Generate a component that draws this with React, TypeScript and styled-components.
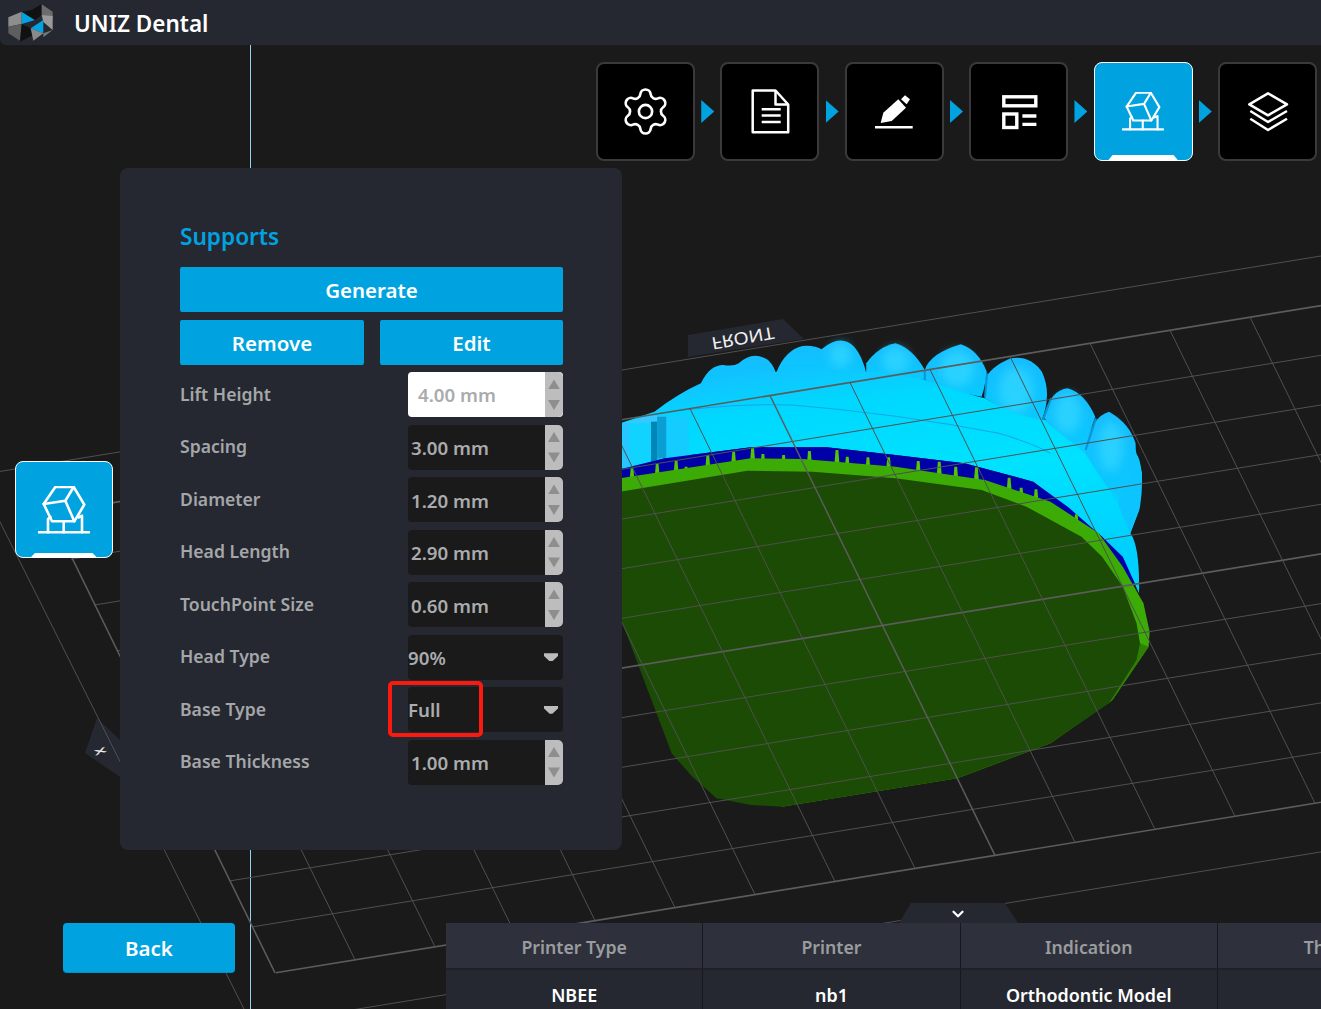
import React from "react";
import styled, { createGlobalStyle } from "styled-components";
import { Settings, ChevronDown } from "lucide-react";

const Global = createGlobalStyle`
  html, body { margin: 0; padding: 0; background: #1a1a1a; }
  * { box-sizing: border-box; }
  body { font-family: "Noto Sans", "Open Sans", sans-serif; }
`;

const Page = styled.div`
  position: relative;
  width: 1321px;
  height: 1009px;
  overflow: hidden;
  background: #1a1a1a;
`;
const SceneSvg = styled.svg`
  position: absolute;
  left: 0;
  top: 0;
  z-index: 0;
`;
const Content = styled.div`
  position: relative;
  z-index: 1;
  display: flex;
  flex-direction: column;
  height: 100%;
`;
const Header = styled.header`
  display: flex;
  align-items: center;
  flex: none;
  height: 45px;
  padding-left: 6px;
  background: #252830;
  border-bottom-left-radius: 6px;
`;
const LogoSvg = styled.svg`
  flex: none;
  margin-right: 8px;
`;
const AppTitle = styled.h1`
  margin: 0;
  padding-top: 2px;
  font-size: 22.5px;
  font-weight: 600;
  color: #fff;
`;
const Toolbar = styled.nav`
  display: flex;
  justify-content: flex-end;
  align-items: center;
  flex: none;
  height: 99px;
  margin-top: 17px;
  padding-right: 4px;
`;
const StepButton = styled.div<{ $active?: boolean }>`
  position: relative;
  display: flex;
  align-items: center;
  justify-content: center;
  flex: none;
  width: 99px;
  height: 99px;
  border-radius: 8px;
  color: #fff;
  background: ${(p) => (p.$active ? "#00a3e0" : "#000")};
  border: ${(p) => (p.$active ? "1px solid #fff" : "2px solid #3a3a3a")};
  ${(p) =>
    p.$active &&
    `&::after {
      content: "";
      position: absolute;
      left: 13px;
      right: 13px;
      bottom: -1px;
      height: 6px;
      background: #fff;
      clip-path: polygon(5px 0, calc(100% - 5px) 0, 100% 100%, 0 100%);
    }`}
`;
const ArrowSlot = styled.div`
  display: flex;
  align-items: center;
  justify-content: center;
  flex: none;
  width: 25.4px;
`;
const ArrowHead = styled.div`
  width: 13px;
  height: 23px;
  background: #00a3e0;
  clip-path: polygon(0 0, 100% 50%, 0 100%);
`;
const Workspace = styled.div`
  display: flex;
  align-items: flex-start;
  flex: none;
  height: 682px;
  margin-top: 7px;
  padding-left: 15px;
`;
const SideButton = styled(StepButton)`
  width: 97.5px;
  height: 97px;
  margin-top: 293px;
  margin-right: 7.5px;
  border-width: 1.5px;
  &::after {
    left: 14px;
    right: 14px;
    height: 5px;
  }
`;
const Panel = styled.section`
  display: flex;
  flex-direction: column;
  width: 502px;
  height: 682px;
  padding: 52px 59px 0 60px;
  background: #252830;
  border-radius: 8px;
`;
const PanelTitle = styled.h2`
  margin: 0 0 13px;
  height: 34px;
  line-height: 34px;
  font-size: 22.6px;
  font-weight: 600;
  color: #00a3e0;
`;
const ActionButton = styled.div`
  display: flex;
  align-items: center;
  justify-content: center;
  height: 45px;
  padding-top: 1px;
  background: #00a3e0;
  border-radius: 2px;
  font-size: 20.5px;
  font-weight: 600;
  color: #fff;
`;
const ActionRow = styled.div`
  display: grid;
  grid-template-columns: 184px 183px;
  justify-content: space-between;
  margin-top: 8px;
  margin-bottom: 7.2px;
`;
const FieldRow = styled.div`
  display: flex;
  align-items: center;
  justify-content: space-between;
  height: 45px;
  margin-bottom: 7.5px;
`;
const FieldLabel = styled.span`
  padding-bottom: 2px;
  font-size: 17.6px;
  font-weight: 600;
  color: #a4a6a9;
`;
const FieldBox = styled.div<{ $light?: boolean }>`
  position: relative;
  display: flex;
  align-items: center;
  width: 155px;
  height: 45px;
  border-radius: 4px;
  background: ${(p) => (p.$light ? "#fff" : "#1a1a1a")};
`;
const FieldValue = styled.span<{ $light?: boolean; $flush?: boolean }>`
  flex: 1;
  padding-left: ${(p) => (p.$light ? "10px" : p.$flush ? "0" : "3px")};
  padding-top: ${(p) => (p.$light ? "0" : p.$flush ? "0" : "1px")};
  font-size: 18.7px;
  font-weight: 600;
  color: #a9abae;
`;
const Spinner = styled.div`
  display: flex;
  flex-direction: column;
  align-items: center;
  justify-content: space-around;
  flex: none;
  width: 18px;
  height: 100%;
  padding: 2px 0;
  background: #bdbdbd;
  border-radius: 0 5px 5px 0;
`;
const SpinArrow = styled.div<{ $down?: boolean }>`
  width: 12px;
  height: 10px;
  background: #8e8e8e;
  clip-path: ${(p) =>
    p.$down ? "polygon(0 0, 100% 0, 50% 100%)" : "polygon(50% 0, 100% 100%, 0 100%)"};
`;
const Caret = styled.div`
  flex: none;
  width: 14px;
  height: 8px;
  margin-right: 5px;
  background: #bcbcbc;
  clip-path: polygon(0 0, 100% 0, 100% 35%, 60% 100%, 40% 100%, 0 35%);
`;
const Highlight = styled.div`
  position: absolute;
  left: -20.5px;
  top: -6.5px;
  width: 95px;
  height: 56px;
  border: 4px solid #fb1a0f;
  border-radius: 5px;
`;
const Footer = styled.footer`
  display: flex;
  align-items: flex-start;
  flex: none;
  margin-top: 73px;
  padding-left: 63px;
`;
const BackButton = styled.div`
  display: flex;
  align-items: center;
  justify-content: center;
  flex: none;
  width: 172px;
  height: 50px;
  margin-right: 211px;
  background: #00a3e0;
  border-bottom: 1px solid #0090c6;
  border-radius: 4px;
  font-size: 20.5px;
  font-weight: 600;
  color: #fff;
`;
const InfoTable = styled.div`
  position: relative;
  display: grid;
  flex: none;
  grid-template-columns: repeat(4, 257.3px);
  grid-template-rows: 47px 50px;
  border-top-left-radius: 5px;
  background: #252830;
`;
const Collapse = styled.div`
  position: absolute;
  left: 453px;
  top: -20px;
  display: flex;
  justify-content: center;
  padding-top: 2px;
  padding-right: 1px;
  width: 119px;
  height: 20px;
  color: #fff;
  background: #252830;
  clip-path: polygon(10% 0, 89% 0, 100% 100%, 0 100%);
`;
const HeadCell = styled.div`
  display: flex;
  align-items: center;
  justify-content: center;
  padding-top: 2px;
  white-space: nowrap;
  background: #2e313b;
  border-right: 1px solid #17181c;
  border-bottom: 2px solid #1f2127;
  font-size: 17.7px;
  font-weight: 600;
  color: #9a9c9f;
`;
const BodyCell = styled.div`
  display: flex;
  align-items: center;
  justify-content: center;
  white-space: nowrap;
  border-right: 1px solid #17181c;
  font-size: 17.9px;
  font-weight: 600;
  color: #fff;
`;

const IconSvg = styled.svg<{ $stroke?: number }>`
  display: block;
  fill: none;
  stroke: currentColor;
  stroke-width: ${(p) => p.$stroke ?? 2.5};
`;

const DocIcon = () => (
  <IconSvg width={48} height={48} viewBox="0 0 48 48" strokeLinejoin="round">
    <path d="M6.7 2.5H29.5L42.2 16.5V44.2H6.7Z" />
    <path d="M29.5 2.5V16.5H42.2" />
    <path d="M15.7 21.3H34.7M15.7 27.6H34.7M15.7 34H34.7" />
  </IconSvg>
);
const PencilIcon = () => (
  <IconSvg width={48} height={48} viewBox="0 0 48 48">
    <path d="M10.7 35L13.3 24.7L28.3 11.3L36 19.7L21.7 33Z" fill="currentColor" stroke="none" />
    <path d="M35 7.3L40 11.3L36.7 16.3L31 11.3Z" fill="currentColor" stroke="none" />
    <path d="M5 39.3H42.7" />
  </IconSvg>
);
const LayoutIcon = () => (
  <IconSvg width={48} height={48} viewBox="0 0 48 48" $stroke={3.4}>
    <rect x="8.8" y="8.8" width="32" height="9" />
    <rect x="8.8" y="26" width="13" height="13.5" />
    <path d="M27.4 28H41.4M27.4 36.4H41.4" />
  </IconSvg>
);
const SupportsIcon = ({ width }: { width: number }) => (
  <IconSvg
    width={width}
    height={(width * 48) / 52}
    viewBox="0 0 52 48"
    strokeLinejoin="round"
    strokeLinecap="round"
    $stroke={2.6}
  >
    <path d="M5.7 18L17.3 1H35.7L46.3 18.7L36.3 35.3H14Z" />
    <path d="M5.7 18L27.3 14.7L35.7 1M27.3 14.7L36.3 35.3" />
    <path d="M10 33V46.3M25.7 35.3V46.3M44 29.7V46.3M10 33L12.5 31M44 29.7L40.5 31.5" />
    <path d="M0.5 46.3H51" />
  </IconSvg>
);
const LayersIcon = () => (
  <IconSvg width={48} height={48} viewBox="0 0 48 48" strokeLinejoin="round">
    <path d="M5.3 16.3L24 5.3L43 16.3L24 27.3Z" />
    <path d="M6.3 23L24 34L43 23" />
    <path d="M6.3 30.7L24 42L43 30.7" />
  </IconSvg>
);

const Logo = () => (
  <LogoSvg width={60} height={45} viewBox="18 0 180 135">
    <polygon points="25,52 65,35 65,72 25,80" fill="#8d8d8d" />
    <polygon points="65,35 105,60 65,72" fill="#00a3e0" />
    <polygon points="65,35 95,30 125,12 125,45 105,60" fill="#111" />
    <polygon points="125,13 158,35 158,58 125,45" fill="#6c6c6c" />
    <polygon points="125,45 158,48 158,90 130,66" fill="#9a9a9a" />
    <polygon points="130,60 130,100 92,85" fill="#00a3e0" />
    <polygon points="25,80 65,72 60,122 25,100" fill="#5e5e5e" />
    <polygon points="65,72 92,85 100,105 60,125" fill="#111" />
    <polygon points="92,85 130,100 100,122" fill="#8a8a8a" />
    <polygon points="130,100 158,90 130,112" fill="#777" />
  </LogoSvg>
);

const SLOPE = -0.1631;
const rowY = (k: number, x: number) => 370 + 49.66 * k + SLOPE * (x - 622);
const rowStart = (k: number) => {
  // intersection of row k with the left plate edge
  const a = 0.4945;
  let y = rowY(k, 275);
  for (let i = 0; i < 6; i++) y = rowY(k, 275 + (y - 971) * a);
  return 275 + (y - 971) * a;
};
const rows = Array.from({ length: 13 }, (_, k) => k);
const cols = Array.from({ length: 17 }, (_, c) => c);
const spikes = [
  [35, 475], [108, 462], [163, 452], [192, 470], [255, 435], [330, 425], [385, 413], [415, 432],
  [475, 435], [550, 423], [630, 420], [660, 440], [720, 442], [780, 442], [866, 453], [927, 455],
  [975, 470], [1035, 472], [1130, 503], [1165, 533], [1208, 538], [1325, 613],
];
const toothShapes = [
  "M235,220 Q260,165 300,165 Q330,170 345,160 Q385,120 430,150 Q450,170 455,200 L235,230Z",
  "M455,185 Q480,120 530,108 Q565,105 585,118 Q640,70 680,110 Q705,140 715,190 L455,200Z",
  "M715,160 Q750,110 800,100 Q850,115 885,180 L885,210 L715,200Z",
  "M885,180 Q900,130 990,103 Q1040,120 1065,185 Q1060,230 1050,260 L950,240 L885,210Z",
  "M1060,210 Q1075,170 1135,145 Q1190,135 1225,185 Q1255,250 1225,330 L1150,320 L1060,265Z",
  "M1230,320 Q1250,240 1300,235 Q1350,250 1380,320 L1350,410 L1270,380Z",
  "M1350,410 Q1370,320 1420,305 Q1480,340 1497,400 L1500,470 L1450,560 L1350,470Z",
];
const toothGlints = [
  [640, 135, 32, 38],
  [800, 150, 40, 40],
  [980, 175, 50, 55],
  [1150, 240, 50, 70],
  [1300, 310, 38, 60],
  [1425, 410, 36, 75],
];
const toothGaps = [
  "M885,210 L885,178",
  "M1060,262 L1066,190",
  "M1228,330 L1252,265",
  "M1352,420 L1382,325",
];

const Scene = () => (
  <SceneSvg width={1321} height={1009} viewBox="0 0 1321 1009">
    <defs>
      <linearGradient id="tooth" x1="0" y1="0" x2="0" y2="1">
        <stop offset="0" stopColor="#16bcff" />
        <stop offset="1" stopColor="#0ac8ff" />
      </linearGradient>
      <linearGradient id="gum" x1="0" y1="0" x2="0.3" y2="1">
        <stop offset="0" stopColor="#1cb8ff" />
        <stop offset="0.25" stopColor="#00d8ff" />
        <stop offset="0.6" stopColor="#00e2ff" />
        <stop offset="1" stopColor="#00d0ff" />
      </linearGradient>
      <filter id="soft" x="-30%" y="-30%" width="160%" height="160%">
        <feGaussianBlur stdDeviation="14" />
      </filter>
    </defs>
    <line x1="250.5" y1="45" x2="250.5" y2="1009" stroke="#8fd3ee" strokeWidth="1" />
    <polygon points="97,718 85,753 120,777 120,740" fill="#252830" />
    <text
      x="0"
      y="0"
      transform="translate(100 751) rotate(-20) scale(1.5 0.55)"
      textAnchor="middle"
      dominantBaseline="central"
      fontFamily="Noto Sans"
      fontSize="13"
      fontWeight="600"
      fill="#e8e8e8"
    >
      X
    </text>
    <polygon points="688,335 783,319 804,339 688,357" fill="#252830" />
    <text
      x="0"
      y="0"
      transform="translate(743 339) rotate(-10) scale(1.15 -1)"
      textAnchor="middle"
      dominantBaseline="central"
      fontFamily="Noto Sans"
      fontSize="17"
      fill="#f0f0f0"
    >
      FRONT
    </text>
    <g transform="translate(620 310) scale(0.34437 0.33333)">
      <path d="M1150,300 L1497,420 L1516,490 L1508,600 L1482,670 L1420,680 L1250,440Z" fill="#06ceff" />
      <path d="M1450,560 Q1490,470 1503,435 Q1525,490 1510,590 L1482,670 L1440,640Z" fill="#0cc4ff" />
      {toothShapes.map((d) => (
        <path key={d} d={d} fill="url(#tooth)" />
      ))}
      {toothGlints.map(([cx, cy, rx, ry]) => (
        <ellipse key={cx} cx={cx} cy={cy} rx={rx} ry={ry} fill="#3adcff" opacity="0.6" filter="url(#soft)" />
      ))}
      <path
        d="M0,340 L100,305 Q170,250 235,220 Q350,190 455,185 Q600,175 715,185 Q800,190 885,210 Q1000,250 1060,265 Q1150,320 1230,330 Q1290,380 1350,430 Q1420,540 1445,580 L1482,670 Q1510,710 1507,850 L1490,810 L1400,680 L1200,515 L1000,460 L800,435 L600,412 L380,412 L130,445 L0,478Z"
        fill="url(#gum)"
      />
      {toothGaps.map((d) => (
        <path key={d} d={d} fill="none" stroke="#0a94d4" strokeWidth="6" />
      ))}
      <path d="M100,312 Q300,280 500,285 Q800,310 1100,370 Q1200,400 1250,430" fill="none" stroke="#12a6ea" strokeWidth="3" />
      <rect x="8" y="340" width="18" height="135" fill="#2cc4ff" />
      <rect x="26" y="340" width="64" height="135" fill="#10d4ff" />
      <polygon points="8,340 90,315 135,320 90,340" fill="#38c8ff" />
      <rect x="90" y="335" width="18" height="125" fill="#0086b6" />
      <rect x="108" y="320" width="27" height="125" fill="#0a9ed2" />
      <rect x="135" y="320" width="65" height="125" fill="#14ccff" />
      <path
        d="M0,478 L130,445 L380,412 L600,412 L800,435 L1000,460 L1200,515 L1300,590 L1400,680 L1460,740 L1495,820 L1470,830 L1340,660 L1050,510 L800,470 L530,447 L380,445 L0,505Z"
        fill="#0000a8"
      />
      {spikes.map(([x, y]) => (
        <polygon key={x} points={`${x - 4},${y} ${x + 4},${y} ${x + 7},${y + 38} ${x - 7},${y + 38}`} fill="#55c408" />
      ))}
      <path
        d="M0,505 L380,445 L530,447 L800,470 L1060,510 L1250,575 L1390,670 L1460,770 L1520,880 L1538,965 L1535,1010 L1430,1170 L1250,1300 L980,1405 L470,1490 L0,920Z"
        fill="#3dab06"
      />
      <path d="M1510,1000 L1535,1010 L1430,1170 L1420,1180Z" fill="#2f7f05" />
      <path
        d="M0,545 L370,482 L560,485 L800,505 L1050,540 L1180,590 L1340,680 L1400,740 L1460,830 L1500,940 L1510,1000 L1500,1050 L1420,1180 L1250,1300 L980,1405 L470,1490 L380,1485 L280,1465 L210,1400 L150,1330 L0,920Z"
        fill="#1b4b04"
      />
    </g>
    {rows.map((k) => {
      const thick = k === 1 || k === 6 || k === 11;
      const x1 = k === 0 ? 0 : k === 12 ? 340 : rowStart(k);
      return (
        <line
          key={k}
          x1={x1}
          y1={rowY(k, x1)}
          x2={1321}
          y2={rowY(k, 1321)}
          stroke={thick ? "#5c5c5c" : "#505050"}
          strokeWidth={thick ? 1.7 : 1}
        />
      );
    })}
    {cols.map((c) => {
      const tx = 50 + 80 * c;
      const bx = 275 + 80 * c;
      const thick = c === 0 || c === 9;
      return (
        <line
          key={c}
          x1={tx}
          y1={rowY(1, tx)}
          x2={bx}
          y2={rowY(11, bx)}
          stroke={thick ? "#5c5c5c" : "#505050"}
          strokeWidth={thick ? 1.5 : 1}
        />
      );
    })}
    <line x1="-4" y1="514" x2="244" y2="1009" stroke="#505050" strokeWidth="1" />
  </SceneSvg>
);

type Field = { label: string; value: string; kind: "spin" | "light" | "select" | "marked" };
const fields: Field[] = [
  { label: "Lift Height", value: "4.00 mm", kind: "light" },
  { label: "Spacing", value: "3.00 mm", kind: "spin" },
  { label: "Diameter", value: "1.20 mm", kind: "spin" },
  { label: "Head Length", value: "2.90 mm", kind: "spin" },
  { label: "TouchPoint Size", value: "0.60 mm", kind: "spin" },
  { label: "Head Type", value: "90%", kind: "select" },
  { label: "Base Type", value: "Full", kind: "marked" },
  { label: "Base Thickness", value: "1.00 mm", kind: "spin" },
];

const SpinControl = () => (
  <Spinner>
    <SpinArrow />
    <SpinArrow $down />
  </Spinner>
);

const steps = [
  <Settings key="s" size={53} strokeWidth={1.2} />,
  <DocIcon key="d" />,
  <PencilIcon key="p" />,
  <LayoutIcon key="l" />,
  <SupportsIcon key="u" width={42} />,
  <LayersIcon key="y" />,
];

const heads = ["Printer Type", "Printer", "Indication", "Thickness"];
const values = ["NBEE", "nb1", "Orthodontic Model", ""];

export default function App() {
  return (
    <Page>
      <Global />
      <Scene />
      <Content>
        <Header>
          <Logo />
          <AppTitle>UNIZ Dental</AppTitle>
        </Header>
        <Toolbar>
          {steps.map((icon, i) => (
            <React.Fragment key={i}>
              <StepButton $active={i === 4}>{icon}</StepButton>
              {i < steps.length - 1 && (
                <ArrowSlot>
                  <ArrowHead />
                </ArrowSlot>
              )}
            </React.Fragment>
          ))}
        </Toolbar>
        <Workspace>
          <SideButton $active>
            <SupportsIcon width={52} />
          </SideButton>
          <Panel>
            <PanelTitle>Supports</PanelTitle>
            <ActionButton>Generate</ActionButton>
            <ActionRow>
              <ActionButton>Remove</ActionButton>
              <ActionButton>Edit</ActionButton>
            </ActionRow>
            {fields.map((f) => (
              <FieldRow key={f.label}>
                <FieldLabel>{f.label}</FieldLabel>
                <FieldBox $light={f.kind === "light"}>
                  <FieldValue $light={f.kind === "light"} $flush={f.kind === "select" || f.kind === "marked"}>
                    {f.value}
                  </FieldValue>
                  {f.kind === "spin" || f.kind === "light" ? <SpinControl /> : <Caret />}
                  {f.kind === "marked" && <Highlight />}
                </FieldBox>
              </FieldRow>
            ))}
          </Panel>
        </Workspace>
        <Footer>
          <BackButton>Back</BackButton>
          <InfoTable>
            <Collapse>
              <ChevronDown size={18} strokeWidth={3} />
            </Collapse>
            {heads.map((h) => (
              <HeadCell key={h}>{h}</HeadCell>
            ))}
            {values.map((v, i) => (
              <BodyCell key={i}>{v}</BodyCell>
            ))}
          </InfoTable>
        </Footer>
      </Content>
    </Page>
  );
}
